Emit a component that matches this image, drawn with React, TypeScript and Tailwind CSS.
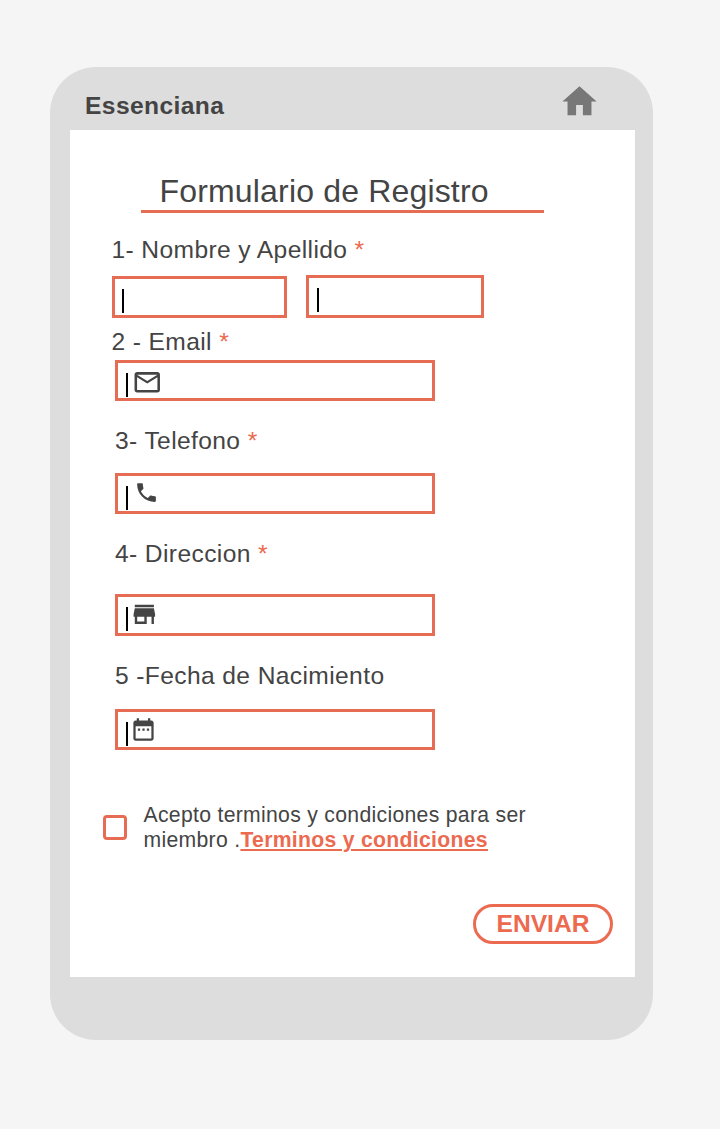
import type { ReactNode } from "react";

function Icon({ d, className }: { d: string; className: string }) {
  return (
    <svg viewBox="0 0 24 24" fill="currentColor" className={`shrink-0 ${className}`} aria-hidden="true">
      <path d={d} />
    </svg>
  );
}

const HOME = "M10 20v-6h4v6h5v-8h3L12 3 2 12h3v8z";
const MAIL =
  "M22 6c0-1.1-.9-2-2-2H4c-1.1 0-2 .9-2 2v12c0 1.1.9 2 2 2h16c1.1 0 2-.9 2-2V6zm-2 0l-8 5-8-5h16zm0 12H4V8l8 5 8-5v10z";
const PHONE =
  "M6.62 10.79c1.44 2.83 3.76 5.14 6.59 6.59l2.2-2.2c.27-.27.67-.36 1.02-.24 1.12.37 2.33.57 3.57.57.55 0 1 .45 1 1V20c0 .55-.45 1-1 1-9.39 0-17-7.61-17-17 0-.55.45-1 1-1h3.5c.55 0 1 .45 1 1 0 1.25.2 2.45.57 3.57.11.35.03.74-.25 1.02l-2.2 2.2z";
const STORE =
  "M20 4H4v2h16V4zm1 10v-2l-1-5H4l-1 5v2h1v6h10v-6h4v6h2v-6h1zm-9 4H6v-4h6v4z";
const CALENDAR =
  "M9 11H7v2h2v-2zm4 0h-2v2h2v-2zm4 0h-2v2h2v-2zm2-7h-1V2h-2v2H8V2H6v2H5c-1.11 0-1.99.9-1.99 2L3 20c0 1.1.89 2 2 2h14c1.1 0 2-.9 2-2V6c0-1.1-.9-2-2-2zm0 16H5V9h14v11z";

function Label({ children, required, className }: { children: ReactNode; required?: boolean; className: string }) {
  return (
    <div className={`h-7 whitespace-nowrap text-[24.6px] leading-7 tracking-[0.38px] ${className}`}>
      {children}
      {required && <span className="text-[#ec6a50]"> *</span>}
    </div>
  );
}

function Field({ className, children }: { className: string; children?: ReactNode }) {
  return (
    <div className={`flex items-start border-3 border-[#e66c53] ${className}`}>
      <span className="mt-[10px] h-[23.5px] w-[2px] shrink-0 bg-black" />
      {children}
    </div>
  );
}

export default function App() {
  return (
    <div className="flex h-[1129px] w-[720px] items-start bg-[#f5f5f5] pt-[67px] pl-[50px] font-['Liberation_Sans',Arial,sans-serif] text-[#444444]">
      <div className="flex h-[973px] w-[603px] flex-col rounded-[46px] bg-[#dddddd]">
        <header className="flex h-[63px] shrink-0 items-start justify-between pr-[53px] pl-[35px]">
          <h1 className="mt-[25px] text-[24.6px] leading-7 font-bold tracking-[0.4px]">Essenciana</h1>
          <Icon d={HOME} className="mt-[13.5px] size-[41px] text-[#777777]" />
        </header>
        <main className="ml-[19.5px] flex h-[847px] w-[565px] flex-col bg-white pt-[42px]">
          <h2 className="ml-[71.5px] h-[41px] w-[403px] border-b-3 border-[#e66c53] pl-[18.5px] text-[32px] leading-[38px] tracking-[0.17px] whitespace-nowrap">
            Formulario de Registro
          </h2>
          <Label required className="mt-[23px] ml-[42px]">1- Nombre y Apellido</Label>
          <div className="mt-[11px] ml-[42.5px] flex items-end gap-[19px]">
            <Field className="h-[42px] w-[175px] pl-[7px]" />
            <Field className="h-[43px] w-[178px] pl-[8px]" />
          </div>
          <Label required className="mt-[10px] ml-[42px]">2 - Email</Label>
          <Field className="mt-[4px] ml-[45.5px] h-[41px] w-[320px] pl-[8px]">
            <Icon d={MAIL} className="mt-[4px] ml-[4px] size-[30.5px]" />
          </Field>
          <Label required className="mt-[26px] ml-[45.5px]">3- Telefono</Label>
          <Field className="mt-[18px] ml-[45.5px] h-[41px] w-[320px] pl-[8px]">
            <Icon d={PHONE} className="mt-[4px] ml-[6px] size-[25px]" />
          </Field>
          <Label required className="mt-[26px] ml-[45.5px]">4- Direccion</Label>
          <Field className="mt-[26px] ml-[45.5px] h-[42px] w-[320px] pl-[8px]">
            <Icon d={STORE} className="mt-[2.5px] ml-[1.5px] size-[28.7px]" />
          </Field>
          <Label className="mt-[26px] ml-[45.5px]">5 -Fecha de Nacimiento</Label>
          <Field className="mt-[19px] ml-[45.5px] h-[41px] w-[320px] pl-[8px]">
            <Icon d={CALENDAR} className="mt-[4px] ml-[2px] size-[27px]" />
          </Field>
          <div className="mt-[52px] ml-[33.5px] flex items-start">
            <span className="mt-[13px] h-[25px] w-6 shrink-0 rounded-[4px] border-3 border-[#e66c53]" />
            <p className="ml-[16.5px] text-[21.2px] leading-[25px] tracking-[0.3px] whitespace-nowrap">
              Acepto terminos y condiciones para ser
              <br />
              miembro .
              <a className="font-bold text-[#ec6a50] underline decoration-2 underline-offset-2">Terminos y condiciones</a>
            </p>
          </div>
          <button className="mt-[52px] ml-[403.5px] h-10 w-[140px] rounded-full border-3 border-[#ec6a50] text-[24.6px] leading-[34px] font-bold text-[#ec6a50]">
            ENVIAR
          </button>
        </main>
      </div>
    </div>
  );
}
